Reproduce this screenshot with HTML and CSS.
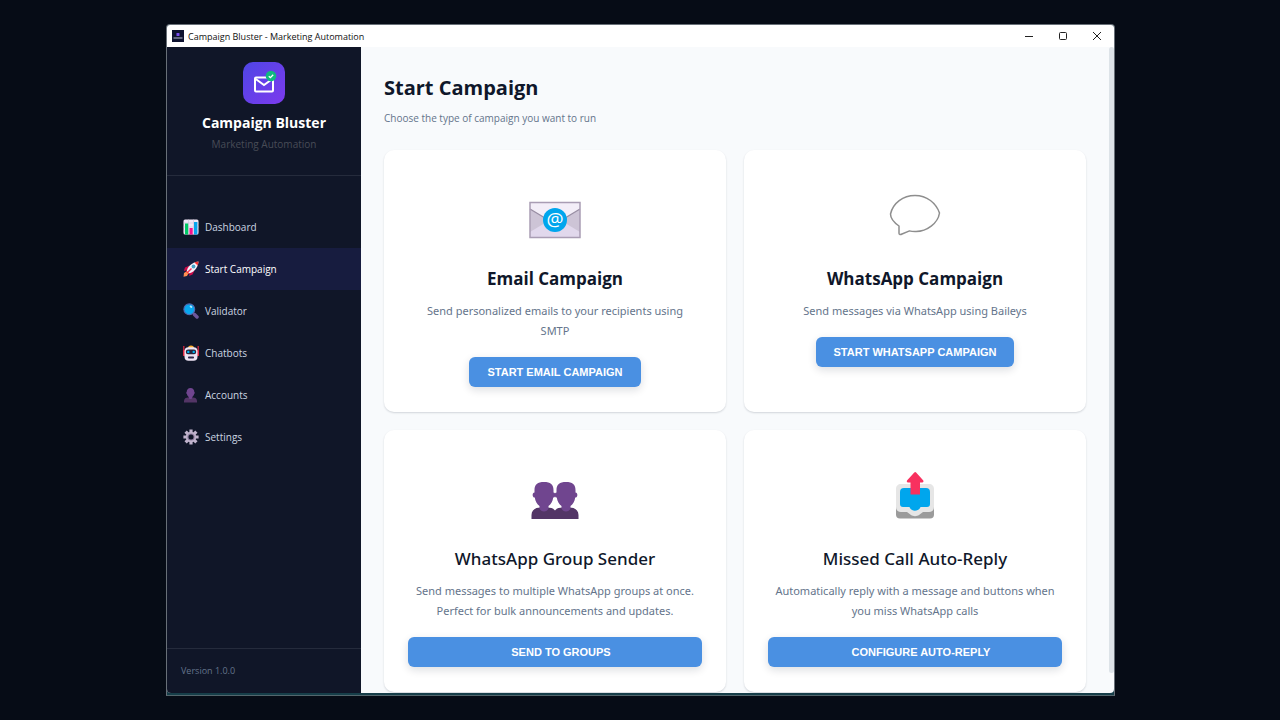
FILE: index.html
```html
<!DOCTYPE html>
<html lang="en">
<head>
<meta charset="utf-8">
<meta name="viewport" content="width=device-width, initial-scale=1">
<title>Campaign Bluster - Marketing Automation</title>
<link rel="stylesheet" href="styles.css">
</head>
<body>
<div class="window">
  <header class="titlebar">
    <svg class="app-icon" viewBox="0 0 12 12" aria-hidden="true"><rect width="12" height="12" fill="#0e1230"/><rect x="4.500" y="3" width="3" height="3" rx=".6" fill="#7a4df0"/><path d="M1.500 8h9" stroke="#b8bdd0" stroke-width="1"/></svg>
    <span class="window-title">Campaign Bluster - Marketing Automation</span>
    <button class="win-btn" type="button" aria-label="Minimize"><svg viewBox="0 0 10 10"><path d="M1 5.500h8"/></svg></button>
    <button class="win-btn" type="button" aria-label="Maximize"><svg viewBox="0 0 10 10"><rect x="1.500" y="1.500" width="7" height="7" rx="1"/></svg></button>
    <button class="win-btn" type="button" aria-label="Close"><svg viewBox="0 0 10 10"><path d="M1 1l8 8M9 1l-8 8"/></svg></button>
  </header>
  <div class="shell">
    <aside class="sidebar">
      <div class="brand">
        <svg class="brand-logo" viewBox="0 0 42 42" aria-hidden="true">
          <defs><linearGradient id="logo" x1="0" y1="0" x2="1" y2="1"><stop offset="0" stop-color="#4f46e5"/><stop offset="1" stop-color="#7c3aed"/></linearGradient></defs>
          <rect width="42" height="42" rx="10" fill="url(#logo)"/>
          <rect x="12" y="15.500" width="18" height="14" rx="1" fill="none" stroke="#fff" stroke-width="2"/>
          <path d="M12 16.500l9 6.500 9-6.500" fill="none" stroke="#fff" stroke-width="2"/>
          <circle cx="28" cy="14" r="5.300" fill="#10b981"/>
          <path d="M25.800 14.200l1.600 1.500 2.800-3" fill="none" stroke="#fff" stroke-width="1.300"/>
        </svg>
        <h2 class="brand-name">Campaign Bluster</h2>
        <p class="brand-tag">Marketing Automation</p>
      </div>
      <nav class="nav">
        <a class="nav-link" href="#dashboard">
          <svg viewBox="0 0 16 16" aria-hidden="true"><rect x=".5" y=".5" width="15" height="15" rx="1.500" fill="#f1e8f7"/><path d="M.5 4h15M.5 8h15M.5 12h15M5.500.5v15M10.500.5v15" stroke="#cfc1db" stroke-width=".6"/><rect x="2" y="4.500" width="3.200" height="11" fill="#00c965"/><rect x="6.500" y="9" width="3.200" height="6.500" fill="#f5128c"/><rect x="11" y="3" width="3.400" height="12.500" fill="#08a5ed"/></svg>
          <span class="nav-text">Dashboard</span></a>
        <a class="nav-link is-active" href="#start" aria-current="page">
          <svg viewBox="0 0 16 16" aria-hidden="true"><path d="M6.500 4.500L2 6.500.8 10l4-1z" fill="#ca0b4a"/><path d="M11.500 9.500L9.500 13.500 6 15l1-4z" fill="#ca0b4a"/><path d="M3.500 11.500C4 6 8.500 1.500 15.500.5 15 7.500 10 12 4.500 12.800z" fill="#f4f0f8"/><path d="M11.500 1.500C13 .9 14 .7 15.500.5c-.1 1.300-.4 2.700-.9 4z" fill="#f8312f"/><path d="M3.500 9.500l3 3-2.500 1L2.300 12z" fill="#f8312f"/><path d="M1 12l2-1.200 2.200 2L4 15 .5 15.800z" fill="#ff9052"/><circle cx="10.500" cy="5.500" r="1.900" fill="#46a4c9"/><path d="M5 11l3.500-3.500" stroke="#f8315d" stroke-width="1.500"/></svg>
          <span class="nav-text">Start Campaign</span></a>
        <a class="nav-link" href="#validator">
          <svg viewBox="0 0 16 16" aria-hidden="true"><path d="M9.500 9.500l2 2" stroke="#796ba0" stroke-width="2"/><path d="M11.500 11.500l2.500 2.500" stroke="#6c579b" stroke-width="3.500" stroke-linecap="round"/><circle cx="6.300" cy="6.300" r="5.400" fill="#08a8f0" stroke="#526bb3" stroke-width="1.100"/><ellipse cx="8" cy="3.800" rx="1.400" ry="1" fill="#b8e9ff" transform="rotate(35 8 3.800)"/></svg>
          <span class="nav-text">Validator</span></a>
        <a class="nav-link" href="#chatbots">
          <svg viewBox="0 0 16 16" aria-hidden="true"><path d="M.8 1v10M15.200 1v10" stroke="#d3263e" stroke-width="1.300"/><rect x="0" y="5" width="2.500" height="6" rx="1" fill="#e22b45"/><rect x="13.500" y="5" width="2.500" height="6" rx="1" fill="#e22b45"/><path d="M5 3a3 2.600 0 0 1 6 0z" fill="#ffb02e"/><rect x="1.500" y="2.300" width="13" height="13.400" rx="4" fill="#eee5f5"/><rect x="2.800" y="4.600" width="10.400" height="4.600" rx="2.200" fill="#28243b"/><circle cx="5.300" cy="6.900" r="1.200" fill="#00b7f5"/><circle cx="10.700" cy="6.900" r="1.200" fill="#00b7f5"/><rect x="5" y="11.500" width="6" height="2" rx=".8" fill="#30294a"/></svg>
          <span class="nav-text">Chatbots</span></a>
        <a class="nav-link" href="#accounts">
          <svg viewBox="0 0 16 16" aria-hidden="true"><path d="M1 15.500v-1.500C1 11.500 3 10.500 5 10.500h5c2 0 4 1 4 3.500v1.500z" fill="#533566"/><path d="M7.500 1c-2.500 0-3.800 1.700-3.800 4-.6 0-.7 1.700.2 2 .3 1.400 1 2.300 1.900 2.900V11c.5 1.300 2.900 1.300 3.400 0V9.900c.9-.6 1.600-1.500 1.900-2.900.9-.3.800-2 .2-2 0-2.300-1.300-4-3.800-4z" fill="#70458f"/></svg>
          <span class="nav-text">Accounts</span></a>
        <a class="nav-link" href="#settings">
          <svg viewBox="0 0 16 16" aria-hidden="true"><g stroke="#c0b3cc" stroke-width="3.200"><path d="M8 .4v15.200M.4 8h15.200M2.600 2.600l10.800 10.800M13.400 2.600L2.600 13.400"/></g><circle cx="8" cy="8" r="5.200" fill="#c0b3cc"/><circle cx="8" cy="8" r="3.600" fill="#8b7b9c"/><circle cx="8" cy="8" r="2.500" fill="#101628"/></svg>
          <span class="nav-text">Settings</span></a>
      </nav>
      <footer class="version">Version 1.0.0</footer>
    </aside>
    <main class="main">
      <h1 class="page-title">Start Campaign</h1>
      <p class="page-sub">Choose the type of campaign you want to run</p>
      <div class="cards">
        <section class="card">
          <svg class="card-icon" viewBox="0 0 56 56" aria-hidden="true">
            <rect x="3" y="11.500" width="50" height="35" fill="#cdc4d6"/>
            <path d="M3 46.500V41l25-15 25 15v5.500z" fill="#e1d8ec"/>
            <path d="M3 11.500h50V18L28 33 3 18z" fill="#f3eef8"/>
            <path d="M3 18l25 15 25-15" fill="none" stroke="#998ea4" stroke-width="1.300"/>
            <rect x="3" y="11.500" width="50" height="35" fill="none" stroke="#a99db4" stroke-width="1.500"/>
            <circle cx="28" cy="29" r="12" fill="#00a6ed"/>
            <text class="at-sign" x="28" y="35" text-anchor="middle">@</text>
          </svg>
          <h3 class="card-title">Email Campaign</h3>
          <p class="card-text">Send personalized emails to your recipients using SMTP</p>
          <button class="btn" type="button">START EMAIL CAMPAIGN</button>
        </section>
        <section class="card">
          <svg class="card-icon" viewBox="0 0 56 56" aria-hidden="true">
            <path d="M12 35C7 31.500 3.500 27 3.500 23 6 12 16 4.500 28 4.500S49 12 52.500 22C51 32 40 41 28 40.500c-2 0-4-.2-5.500-.6L15 43c-1.500.9-3 .7-3-.8z" fill="#fff" stroke="#8e8e8e" stroke-width="1.500" stroke-linejoin="round"/>
          </svg>
          <h3 class="card-title">WhatsApp Campaign</h3>
          <p class="card-text">Send messages via WhatsApp using Baileys</p>
          <button class="btn" type="button">START WHATSAPP CAMPAIGN</button>
        </section>
        <section class="card">
          <svg class="card-icon" viewBox="0 0 56 56" aria-hidden="true">
            <path d="M4.500 48v-4c0-5 4-7.500 9-7.500h7c3 0 6 .8 7.500 3 1.500-2.200 4.500-3 7.500-3h7c5 0 9 2.500 9 7.500v4z" fill="#533566"/>
            <path id="head" d="M17 11c-6.500 0-9.500 2.500-9.500 8v2.500c-2.500 0-2.500 5 .3 5 .5 4 2.200 6.500 4.700 8.500v2.500c1.500 4 7.500 4 9 0V35c2.500-2 4.200-4.500 4.700-8.500 2.800 0 2.800-5 .3-5V19c0-5.500-3-8-9.500-8z" fill="#70458f"/>
            <use href="#head" x="22"/>
          </svg>
          <h3 class="card-title card-title-medium">WhatsApp Group Sender</h3>
          <p class="card-text">Send messages to multiple WhatsApp groups at once. Perfect for bulk announcements and updates.</p>
          <button class="btn btn-wide" type="button">SEND TO GROUPS</button>
        </section>
        <section class="card">
          <svg class="card-icon" viewBox="0 -1 56 56" aria-hidden="true">
            <rect x="9" y="28" width="38" height="18.500" rx="4" fill="#9b9b9b"/>
            <path d="M14 12h28c3 0 5 2 5 5v18c0 3-2 5-5 5h-6l-4 3c-2 1.500-6 1.500-8 0l-4-3h-6c-3 0-5-2-5-5V17c0-3 2-5 5-5z" fill="#e6e6e6"/>
            <path d="M17 16h22a4 4 0 0 1 4 4v12a3 3 0 0 1-3 3h-6.500c-1.500 4.500-9 5.500-11 0H16a3 3 0 0 1-3-3V20a4 4 0 0 1 4-4z" fill="#00a6ed"/>
            <path d="M27.300.5a1.400 1.400 0 0 1 1.800 0l7 7.800c.8 1 .3 2.200-.8 2.200H33V22.500H23.500v-12H21c-1.200 0-1.600-1.300-.8-2.200z" fill="#f8315f"/>
          </svg>
          <h3 class="card-title card-title-medium">Missed Call Auto-Reply</h3>
          <p class="card-text">Automatically reply with a message and buttons when you miss WhatsApp calls</p>
          <button class="btn btn-wide" type="button">CONFIGURE AUTO-REPLY</button>
        </section>
      </div>
    </main>
    <div class="scroll-track"><div class="scroll-thumb"></div></div>
  </div>
</div>
</body>
</html>
```

FILE: styles.css
```css
* { box-sizing: border-box; }

body {
  margin: 0;
  height: 100vh;
  padding: 24px 165px 24px 166px;
  background: #060c16;
  font-family: "Open Sans", "Noto Sans", sans-serif;
  overflow: hidden;
}

h1, h2, h3, p { margin: 0; }

.window {
  height: 100%;
  display: flex;
  flex-direction: column;
  border: 1px solid #687078;
  border-bottom-color: #53666c;
  border-radius: 4px 4px 0 0;
  padding-bottom: 2px;
  background: #163e49;
  overflow: hidden;
}

.titlebar {
  display: flex;
  align-items: center;
  flex: none;
  height: 22px;
  padding-left: 5px;
  background: #fff;
}
.app-icon { width: 12px; height: 12px; }
.window-title { flex: 1; margin-left: 4px; font-size: 9px; color: #111; }
.win-btn {
  width: 34px;
  height: 22px;
  padding: 0;
  border: 0;
  background: none;
  display: grid;
  place-items: center;
}
.win-btn svg { width: 10px; height: 10px; fill: none; stroke: #222; stroke-width: 1; }

.shell {
  flex: 1;
  min-height: 0;
  display: flex;
  background: #f8fafc;
  border-radius: 0 0 4px 4px;
  overflow: hidden;
}

.sidebar {
  flex: none;
  width: 194px;
  display: flex;
  flex-direction: column;
  background: #101628;
}
.brand {
  display: flex;
  flex-direction: column;
  align-items: center;
  height: 129px;
  padding-top: 15px;
  border-bottom: 1px solid #252b3c;
}
.brand-logo { width: 42px; height: 42px; }
.brand-name { margin-top: 9px; font-size: 14px; line-height: 20px; font-weight: 700; color: #fff; }
.brand-tag { margin-top: 3px; font-size: 10px; line-height: 16px; color: #484c57; }

.nav { flex: 1; padding-top: 30px; }
.nav-link {
  display: flex;
  align-items: center;
  gap: 6px;
  height: 42px;
  padding-left: 16px;
  font-size: 10px;
  font-weight: 500;
  line-height: 16px;
  color: #cbd5e1;
  text-decoration: none;
}
.nav-link svg { width: 16px; height: 16px; }
.nav-link.is-active { background: #171c3f; color: #fff; }

.version {
  height: 45px;
  padding: 14px;
  border-top: 1px solid #252b3c;
  font-size: 9px;
  line-height: 16px;
  color: #64748b;
}

.main { flex: 1; min-width: 0; padding: 27px 23px 0; overflow: hidden; }
.page-title { font-size: 20px; line-height: 28px; font-weight: 700; color: #0f172a; }
.page-sub { margin-top: 8px; font-size: 10px; line-height: 16px; color: #64748b; }

.cards {
  display: grid;
  grid-template-columns: 1fr 1fr;
  gap: 18px;
  margin-top: 24px;
}
.card {
  display: flex;
  flex-direction: column;
  align-items: center;
  padding: 41px 24px 25px;
  border-radius: 10px;
  background: #fff;
  box-shadow: 0 1px 2px rgba(15, 23, 42, 0.16);
  text-align: center;
}
.card-icon { width: 56px; height: 56px; }
.at-sign { font-family: "Open Sans", sans-serif; font-size: 19px; font-weight: 500; fill: #fff; }
.card-title { margin-top: 19px; font-size: 17px; line-height: 26px; font-weight: 700; color: #0f172a; }
.card-title-medium { font-family: "Noto Sans", sans-serif; font-weight: 500; }
.card-text { margin-top: 9px; padding: 0 4px; font-family: "Noto Sans", sans-serif; font-size: 11px; line-height: 20px; color: #64748b; }
.btn {
  height: 30px;
  margin-top: 16px;
  padding: 0 18px;
  border: 0;
  border-radius: 6px;
  background: #4a90e2;
  box-shadow: 0 3px 8px rgba(15, 23, 42, 0.14);
  color: #fff;
  font-family: "Liberation Sans", Arial, sans-serif;
  font-size: 11px;
  font-weight: 700;
}
.btn-wide { width: 100%; padding: 0 12px 0 24px; }

.scroll-track { flex: none; width: 5px; }
.scroll-thumb { height: calc(100% - 20px); border-radius: 3px; background: #dde3e8; }
```
